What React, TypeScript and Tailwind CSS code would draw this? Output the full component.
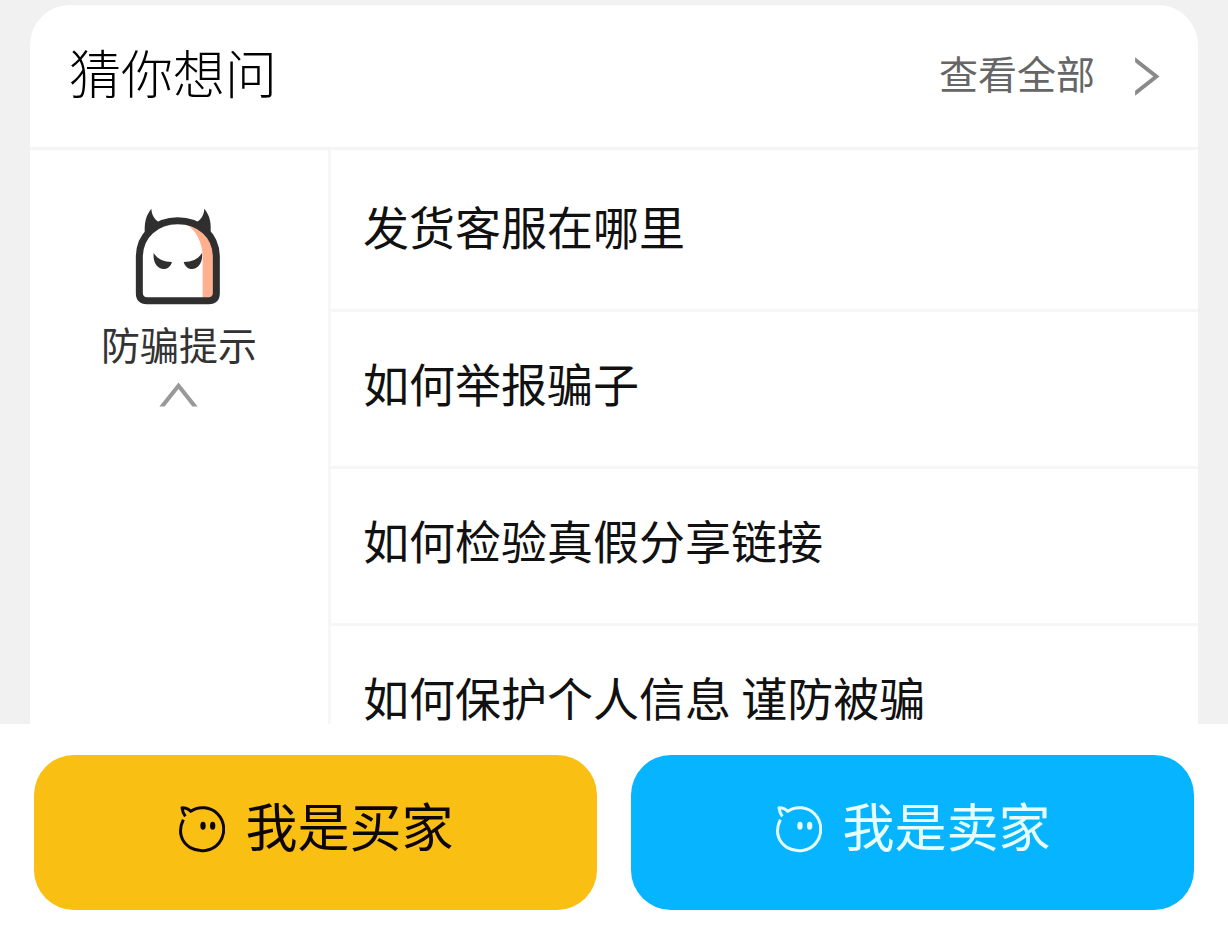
import React from "react";

const questions = [
  "发货客服在哪里",
  "如何举报骗子",
  "如何检验真假分享链接",
  "如何保护个人信息 谨防被骗",
];

function DevilIcon() {
  return (
    <svg viewBox="133 39 264 291" className="h-[97px] w-[88px]" aria-hidden="true">
      <path
        d="M146 186C146 120 198 77 261 77C326 77 377 120 377 186V296Q377 317 356 317H167Q146 317 146 296Z"
        fill="#fff"
      />
      <path d="M286 88C316 104 336 146 336 184V308H358Q368 308 368 298V186C368 134 338 98 286 88Z" fill="#ffb08e" />
      <path
        d="M146 186C146 120 198 77 261 77C326 77 377 120 377 186V294Q377 317 354 317H169Q146 317 146 294Z"
        fill="none"
        stroke="#2f2f2f"
        strokeWidth="21"
      />
      <path d="M182 41C165 62 160 84 163 122L212 84C194 78 183 62 182 41Z" fill="#2f2f2f" />
      <path d="M341 41C358 62 363 84 359 122L311 84C329 78 340 62 341 41Z" fill="#2f2f2f" />
      <path d="M189 174C200 192 218 201 244 201C240 214 232 222 219 222C200 222 186 202 189 174Z" fill="#2f2f2f" />
      <path d="M334 174C323 192 305 201 279 201C283 214 291 222 304 222C323 222 337 202 334 174Z" fill="#2f2f2f" />
    </svg>
  );
}

function FaceIcon() {
  return (
    <svg viewBox="52 75 144 144" className="h-12 w-12" aria-hidden="true">
      <path
        d="M71 119C54 154 64 186 92 203C120 219 158 214 178 189C198 163 197 126 174 102C154 81 118 76 93 94C87 87 77 83 67 83C68 93 71 101 77 109"
        fill="none"
        stroke="currentColor"
        strokeWidth="9"
        strokeLinejoin="round"
      />
      <ellipse cx="130" cy="137" rx="8" ry="12" fill="currentColor" />
      <ellipse cx="159" cy="137" rx="8" ry="12" fill="currentColor" />
    </svg>
  );
}

export default function App() {
  return (
    <div className="flex h-screen flex-col bg-[#f1f1f1] font-['Noto_Sans_CJK_SC',sans-serif] text-[#111]">
      <main className="min-h-0 flex-1 overflow-hidden px-[30px] pt-[5px]">
        <section className="min-h-full rounded-t-[40px] bg-white">
          <header className="flex items-center justify-between border-b-[3px] border-[#f5f5f5] pt-7 pr-[38px] pb-9 pl-[39px]">
            <h1 className="text-[52px] leading-[78px] font-light text-black">猜你想问</h1>
            <a href="#all" className="flex items-center gap-10 text-[39px] leading-[78px] text-[#666]">
              查看全部
              <svg viewBox="705 169 75 118" className="mt-2 h-[39px] w-[25px]" aria-hidden="true">
                <path d="M705 170L779 228L705 286V271L760 228L705 185Z" fill="#8a8a8a" />
              </svg>
            </a>
          </header>
          <div className="flex">
            <button type="button" className="flex w-[298px] shrink-0 flex-col items-center self-start pt-[58px] text-[#333]">
              <DevilIcon />
              <span className="mt-2 text-[39px] leading-[60px]">防骗提示</span>
              <svg viewBox="207 562 118 75" className="mt-[9px] h-[25px] w-[39px] overflow-visible" aria-hidden="true">
                <path d="M205 636L263 563L321 636H305L263 583L221 636Z" fill="#999" />
              </svg>
            </button>
            <ul className="min-w-0 flex-1 border-l-[3px] border-[#f7f7f7] pt-[5px]">
              {questions.map((question) => (
                <li key={question} className="border-b-[3px] border-[#f6f6f6]">
                  <a href="#question" className="block pt-[47px] pr-6 pb-[61px] pl-8 text-[46px] leading-[46px] whitespace-nowrap">
                    {question}
                  </a>
                </li>
              ))}
            </ul>
          </div>
        </section>
      </main>
      <footer className="grid shrink-0 grid-cols-2 gap-[34px] bg-white px-[34px] pt-[31px] pb-7 text-[52px] leading-[60px]">
        <button type="button" className="flex items-center justify-center gap-5 rounded-[40px] bg-[#f9bf13] pt-10 pb-[47px] text-[#0d0604]">
          <FaceIcon />
          <span className="pb-2">我是买家</span>
        </button>
        <button type="button" className="flex items-center justify-center gap-5 rounded-[40px] bg-[#07b4ff] pt-10 pb-[47px] text-[#e6ffff]">
          <FaceIcon />
          <span className="pb-2">我是卖家</span>
        </button>
      </footer>
    </div>
  );
}
